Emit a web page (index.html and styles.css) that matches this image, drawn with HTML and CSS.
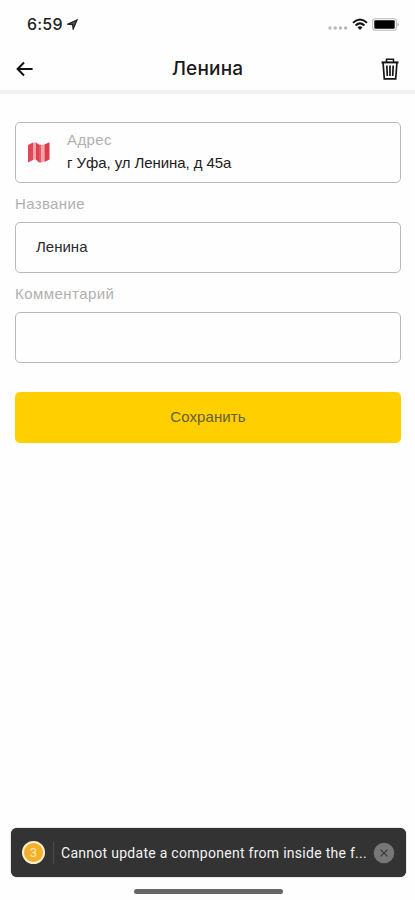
FILE: index.html
```html
<!DOCTYPE html>
<html lang="ru">
<head>
<meta charset="utf-8">
<title>Ленина</title>
<link rel="stylesheet" href="styles.css">
</head>
<body>
<div class="status">
  <span class="time">6:59</span>
  <svg class="location" width="11" height="11" viewBox="0 0 11 11"><path d="M1 5.2 10 1 6.2 10 5.6 5.7Z" fill="#555" stroke="#222" stroke-width="1.3"/></svg>
  <svg class="signal" width="20" height="4" viewBox="0 0 20 4"><g fill="#b9b9b9"><circle cx="2" cy="2" r="1.7"/><circle cx="7.2" cy="2" r="1.7"/><circle cx="12.4" cy="2" r="1.7"/><circle cx="17.6" cy="2" r="1.7"/></g></svg>
  <svg class="wifi" width="16" height="13" viewBox="0 0 16 13"><g fill="none" stroke="#111" stroke-width="2"><path d="M1 4.8Q8-1.8 15 4.8"/><path d="M3.6 7.4Q8 3.3 12.4 7.4"/></g><path d="M5.5 9.2Q8 7.2 10.5 9.2L8 12Z" fill="#111"/></svg>
  <svg class="battery" width="28" height="13" viewBox="0 0 28 13"><rect x=".7" y=".7" width="23.6" height="11.6" rx="2.5" fill="none" stroke="#bbb" stroke-width="1.1"/><rect x="2.3" y="2.2" width="20.4" height="8.6" rx="1" fill="#000"/><path d="M25.6 4.4Q28 6.5 25.6 8.6Z" fill="#999"/></svg>
</div>
<header class="header">
  <svg width="18" height="16" viewBox="0 0 18 16"><path d="M16.6 8H2M8 1.5 1.6 8 8 14.5" fill="none" stroke="#111" stroke-width="2"/></svg>
  <h1 class="title">Ленина</h1>
  <svg width="18" height="22" viewBox="0 0 18 22"><g fill="none" stroke="#161616"><path d="M.5 4.4H17.5" stroke-width="2"/><path d="M5.5 4V1.2H12.5V4" stroke-width="1.5"/><path d="M2.1 5 3.3 20.8H14.7L15.9 5" stroke-width="1.7"/><path d="M5.8 7.5 6.3 18M9 7.5V18M12.2 7.5 11.7 18" stroke-width="1.7"/></g></svg>
</header>
<main class="form">
  <div class="address">
    <svg class="map" width="22" height="21" viewBox="0 0 22 21"><path d="M0 3 5 .5V18L0 20.5Z" fill="#df4858"/><path d="M5 .5 8 .5V17.5L5 18Z" fill="#f0a3a8"/><path d="M8 .5 11 2.5V20.5L8 17.5Z" fill="#dd4050"/><path d="M11 2.5 13.5 3V20.5L11 20.5Z" fill="#e65a67"/><path d="M13.5 3 16.5 2.5V19L13.5 20.5Z" fill="#f0a3a8"/><path d="M16.5 2.5 21.5 .3V17.5L16.5 20Z" fill="#dd3c4d"/></svg>
    <div class="address-text">
      <div class="caption">Адрес</div>
      <div class="value">г Уфа, ул Ленина, д 45а</div>
    </div>
  </div>
  <div class="label label-name">Название</div>
  <div class="input">Ленина</div>
  <div class="label label-comment">Комментарий</div>
  <div class="input"></div>
  <div class="button">Сохранить</div>
</main>
<footer class="bottom">
  <div class="toast">
    <span class="count">3</span>
    <span class="divider"></span>
    <span class="message">Cannot update a component from inside the f...</span>
    <svg class="close" width="22" height="22" viewBox="0 0 22 22"><circle cx="11" cy="11" r="10.3" fill="#777"/><path d="M7.6 7.6 14.4 14.4M14.4 7.6 7.6 14.4" stroke="#3a3a3a" stroke-width="1.3"/></svg>
  </div>
  <div class="home"></div>
</footer>
</body>
</html>
```
FILE: styles.css
```css
* { box-sizing: border-box; }
body { margin: 0; height: 900px; display: flex; flex-direction: column; overflow: hidden; background: #fefefe; color: #1c1c1c; font-family: "Liberation Sans", Arial, sans-serif; }
svg { display: block; flex: none; }
span { white-space: nowrap; }
.status { height: 48px; display: flex; align-items: center; padding: 0 15px 0 27px; }
.time { font: 500 16px/20px Inter, sans-serif; letter-spacing: .2px; color: #222; }
.location { margin-left: 4px; }
.signal { margin: 8px 4px 0 auto; }
.wifi { margin-right: 4px; }
.header { height: 46px; display: flex; align-items: center; justify-content: space-between; padding: 1px 16px 2px; border-bottom: 4px solid #f0f0f0; }
.title { margin: 0; font: 500 19px/24px Inter, sans-serif; letter-spacing: .2px; color: #1a1a1a; }
.form { padding: 28px 14px 0 15px; }
.address { height: 61px; display: flex; align-items: center; padding-left: 12px; border: 1px solid #b9b9b9; border-radius: 5px; }
.address-text { margin-left: 17px; }
.caption, .label { font-size: 15px; color: #b0b0b0; }
.caption { line-height: 23px; margin-top: -3px; letter-spacing: .4px; }
.value { font-size: 15px; line-height: 24px; letter-spacing: -.08px; }
.label { height: 39px; line-height: 42px; }
.label-name { letter-spacing: .35px; }
.label-comment { letter-spacing: .45px; }
.input { height: 51px; border: 1px solid #b9b9b9; border-radius: 5px; padding-left: 20px; font-size: 15px; line-height: 47px; color: #2a2a2a; }
.button { height: 51px; margin-top: 29px; border-radius: 5px; background: #ffcf00; color: #66602f; text-align: center; font-size: 15px; line-height: 49px; letter-spacing: .1px; }
.bottom { margin-top: auto; padding: 0 9px 6px 11px; }
.toast { height: 49px; display: flex; align-items: center; padding: 0 11px; border-radius: 6px; background: #333; box-shadow: 0 0 1px #111; }
.count { width: 23px; height: 23px; border: 2px solid #fff0ce; border-radius: 50%; background: #f3b02a; color: #ffe9bb; text-align: center; font: 13px/19px Roboto, sans-serif; }
.divider { width: 1px; height: 23px; margin: 0 7px 0 8px; background: #4c4c4c; }
.message { font: 14px/20px Roboto, sans-serif; letter-spacing: .28px; color: #f2f2f2; }
.close { margin-left: auto; }
.home { width: 149px; height: 5px; margin: 12px 0 0 123px; border-radius: 3px; background: #666; }
```
